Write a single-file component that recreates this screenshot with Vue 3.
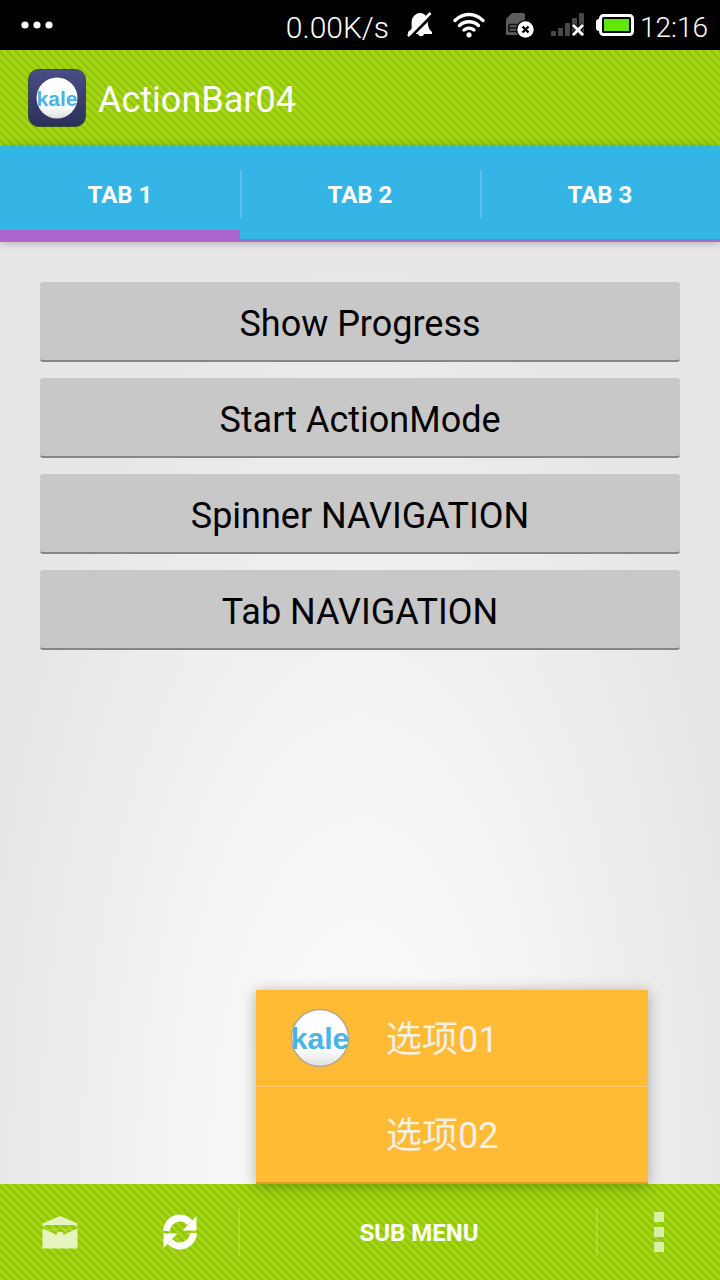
<template>
  <div class="screen">
    <header class="status-bar">
      <svg class="notice" width="34" height="10" viewBox="0 0 34 10" fill="#fff">
        <circle cx="5" cy="5" r="3.6" />
        <circle cx="17" cy="5" r="3.6" />
        <circle cx="29" cy="5" r="3.6" />
      </svg>
      <span class="speed">0.00K/s</span>
      <svg class="mute" width="26" height="26" viewBox="0 0 26 26">
        <path d="M4.500 17C5 14 4 9 5.500 6C7 3 10 1 13 1C17 1 20 4 20.500 8C21 14 21.500 17 25 20V22H17C16.500 25 12 25 11 22H1V20Z" fill="#fff" />
        <path d="M2.500 26L26 2.500" stroke="#000" stroke-width="3" />
        <path d="M1 24L23.500 1" stroke="#fff" stroke-width="2.600" />
      </svg>
      <svg class="wifi" width="32" height="26" viewBox="0 0 32 26" fill="none" stroke="#fff" stroke-width="3.400" stroke-linecap="round">
        <path d="M2 8.500C10 0.500 22 0.500 30 8.500" />
        <path d="M6.500 13.500C12 8.500 20 8.500 25.500 13.500" />
        <path d="M11 18C14 15.500 18 15.500 21 18" />
        <circle cx="16" cy="22.800" r="2.600" fill="#fff" stroke="none" />
      </svg>
      <svg class="sim" width="30" height="26" viewBox="0 0 30 26">
        <path d="M1 22V7L7 1H18Q20 1 20 3V22Q20 23 19 23H2Q1 23 1 22Z" fill="#5c5c5c" />
        <path d="M4 12.500H12M4 16H12M4 19.500H12M4 12.500V19.500" stroke="#111" stroke-width="1.600" fill="none" />
        <circle cx="20.500" cy="17.500" r="9.500" fill="#000" />
        <circle cx="20.500" cy="17.500" r="8.200" fill="#fff" />
        <path d="M17.500 14.500L23.500 20.500M23.500 14.500L17.500 20.500" stroke="#000" stroke-width="2.400" />
      </svg>
      <svg class="signal" width="34" height="26" viewBox="0 0 34 26">
        <g fill="#484848">
          <rect x="0" y="19" width="5" height="5" rx="1" />
          <rect x="7" y="16" width="5" height="8" rx="1" />
          <rect x="14" y="11" width="5" height="13" rx="1" />
          <rect x="21" y="6" width="5" height="18" rx="1" />
          <rect x="28" y="1" width="5" height="23" rx="1" />
        </g>
        <path d="M22 13L32 23M32 13L22 23" stroke="#000" stroke-width="5" />
        <path d="M22 13L32 23M32 13L22 23" stroke="#fff" stroke-width="3" />
      </svg>
      <svg class="battery" width="38" height="24" viewBox="0 0 38 24">
        <rect x="0" y="6" width="8" height="12" rx="3" fill="#fff" />
        <rect x="4.500" y="2.500" width="32" height="19" rx="3" fill="#000" stroke="#fff" stroke-width="3" />
        <rect x="8" y="6" width="25" height="12" fill="#5fe60c" />
      </svg>
      <span class="clock">12:16</span>
    </header>

    <div class="action-bar striped">
      <svg width="58" height="58" viewBox="0 0 58 58">
        <defs>
          <linearGradient id="tile" x1="0" y1="0" x2="0" y2="1">
            <stop offset="0" stop-color="#4a4d85" />
            <stop offset="1" stop-color="#2c3058" />
          </linearGradient>
          <linearGradient id="ball" x1="0" y1="0" x2="0" y2="1">
            <stop offset="0.700" stop-color="#fff" />
            <stop offset="1" stop-color="#ddd" />
          </linearGradient>
        </defs>
        <rect x="0.500" y="0.500" width="57" height="57" rx="10" fill="url(#tile)" stroke="#3b5030" />
        <circle cx="29" cy="29" r="20.500" fill="url(#ball)" />
        <text x="29" y="37" class="logo-text" font-size="21">kale</text>
      </svg>
      <h1>ActionBar04</h1>
    </div>

    <nav class="tabs">
      <button
        v-for="(tab, i) in tabs"
        :key="tab"
        :class="['tab', { active: current === i }]"
        @click="current = i"
      >{{ tab }}</button>
    </nav>

    <main class="content">
      <button v-for="action in actions" :key="action" class="action">{{ action }}</button>
    </main>

    <footer class="bottom-bar striped">
      <button class="icon-btn" aria-label="mail">
        <svg width="36" height="36" viewBox="0 0 36 36" fill="#e6f4c0">
          <path d="M0.500 9.500L18 2L35.500 9.500V12.500L32 11H4L0.500 12.500Z" />
          <path d="M0.500 14.500L13 20A5.600 5.600 0 0 0 23 20L35.500 14.500V34.500H0.500Z" />
          <path d="M5 14.500H31L23.500 18A6.500 6.500 0 0 0 12.500 18Z" opacity="0.250" />
          <circle cx="18" cy="21.500" r="3.800" />
        </svg>
      </button>
      <button class="icon-btn" aria-label="refresh">
        <svg width="36" height="36" viewBox="0 0 36 36">
          <path d="M4.500 17A13.500 13.500 0 0 1 28 8.500" fill="none" stroke="#fff" stroke-width="7" />
          <path d="M34.500 2V16.500H20.500Z" fill="#fff" />
          <path d="M31.500 19A13.500 13.500 0 0 1 8 27.500" fill="none" stroke="#fff" stroke-width="7" />
          <path d="M1.500 34V19.500H15.500Z" fill="#fff" />
        </svg>
      </button>
      <button class="sub-menu" @click="open = !open">SUB MENU</button>
      <button class="more" aria-label="more">
        <i></i><i></i><i></i>
      </button>

      <div v-if="open" class="popup">
        <button v-for="item in items" :key="item.text" class="item">
          <span class="item-icon">
            <svg v-if="item.icon" width="60" height="60" viewBox="0 0 60 60">
              <circle cx="30" cy="30" r="28.500" fill="url(#ball)" stroke="#b9a68c" stroke-width="1.500" />
              <text x="30" y="41" class="logo-text" font-size="30">kale</text>
            </svg>
          </span>
          <span class="item-text">{{ item.text }}</span>
        </button>
      </div>
    </footer>
  </div>
</template>

<script setup>
import { ref } from 'vue'

const current = ref(0)
const open = ref(true)

const tabs = ['TAB 1', 'TAB 2', 'TAB 3']
const actions = ['Show Progress', 'Start ActionMode', 'Spinner NAVIGATION', 'Tab NAVIGATION']
const items = [
  { text: '选项01', icon: true },
  { text: '选项02', icon: false },
]
</script>

<style>
body {
  margin: 0;
}
</style>

<style scoped>
.screen {
  display: flex;
  flex-direction: column;
  min-height: 100vh;
  font-family: Roboto, "Noto Sans CJK SC", sans-serif;
}

button {
  margin: 0;
  padding: 0;
  border: none;
  background: none;
  font-family: inherit;
  cursor: pointer;
}

svg {
  display: block;
  flex: none;
}

.logo-text {
  fill: #4ab4e4;
  font-family: "Liberation Sans", Arial, sans-serif;
  font-weight: bold;
  text-anchor: middle;
}

.striped {
  background-color: #9c0;
  background-image: linear-gradient(45deg, #a5d816 20%, #94c50a 30%, #94c50a 45%, #a5d816 55%, #a5d816 70%, #94c50a 80%, #94c50a 95%, #a5d816);
  background-size: 8px 8px;
}

.status-bar {
  display: flex;
  align-items: center;
  height: 50px;
  padding: 0 12px 0 20px;
  background: #000;
  color: #fff;
  font-size: 30px;
  font-weight: 300;
}

.speed {
  margin-left: auto;
  padding-top: 4px;
}

.mute {
  margin-left: 18px;
}

.wifi {
  margin-left: 20px;
}

.sim {
  margin-left: 20px;
}

.signal {
  margin-left: 16px;
}

.battery {
  margin-left: 11px;
}

.clock {
  margin-left: 6px;
  padding-top: 4px;
  font-size: 28px;
}

.action-bar {
  display: flex;
  align-items: center;
  gap: 12px;
  height: 96px;
  padding: 0 28px;
}

.action-bar h1 {
  margin: 0;
  padding-top: 4px;
  color: #fff;
  font-size: 36px;
  font-weight: 400;
}

.tabs {
  position: relative;
  z-index: 1;
  display: flex;
  height: 96px;
  background: #35b4e6;
  box-shadow: 0 1px 8px rgba(0, 0, 0, 0.25);
}

.tab {
  position: relative;
  flex: 1;
  padding-top: 4px;
  border-bottom: 3px solid #9a70cc;
  color: #fff;
  font-size: 24px;
  font-weight: 700;
}

.tab.active {
  padding-top: 13px;
  border-bottom: 12px solid #a966cc;
}

.tab + .tab::before {
  content: "";
  position: absolute;
  left: 0;
  top: 24px;
  width: 2px;
  height: 48px;
  background: #55c0ea;
}

.content {
  flex: 1;
  display: flex;
  flex-direction: column;
  gap: 16px;
  padding: 40px;
  background: radial-gradient(ellipse 54% 100% at 50% 100%, #fff, #e7e7e7);
}

.action {
  height: 80px;
  padding-top: 5px;
  border-radius: 3px;
  border-bottom: 2px solid #858585;
  background: #c8c8c8;
  color: #000;
  font-size: 36px;
}

.bottom-bar {
  position: relative;
  display: flex;
  height: 96px;
}

.icon-btn {
  display: flex;
  align-items: center;
  justify-content: center;
  width: 120px;
}

.sub-menu {
  position: relative;
  flex: 1;
  padding-top: 2px;
  color: #fff;
  font-size: 24px;
  font-weight: 700;
}

.sub-menu::before,
.sub-menu::after {
  content: "";
  position: absolute;
  top: 24px;
  width: 2px;
  height: 48px;
  background: rgba(190, 230, 80, 0.5);
}

.sub-menu::before {
  left: -2px;
}

.sub-menu::after {
  right: 0;
}

.more {
  display: flex;
  flex-direction: column;
  align-items: center;
  justify-content: center;
  gap: 5px;
  width: 122px;
}

.more i {
  width: 10px;
  height: 10px;
  background: #d9efa4;
}

.popup {
  position: absolute;
  right: 72px;
  bottom: 96px;
  width: 392px;
  box-sizing: border-box;
  border-bottom: 2px solid #e89a2a;
  background: #fb3;
  box-shadow: 0 2px 14px rgba(0, 0, 0, 0.3);
}

.item {
  display: flex;
  align-items: center;
  gap: 36px;
  width: 100%;
  height: 96px;
  padding: 0 34px;
  color: #f5f0e8;
  font-size: 36px;
}

.item + .item {
  border-top: 1px solid #ffca68;
}

.item-icon {
  width: 60px;
}

.item-text {
  padding-bottom: 5px;
}
</style>
